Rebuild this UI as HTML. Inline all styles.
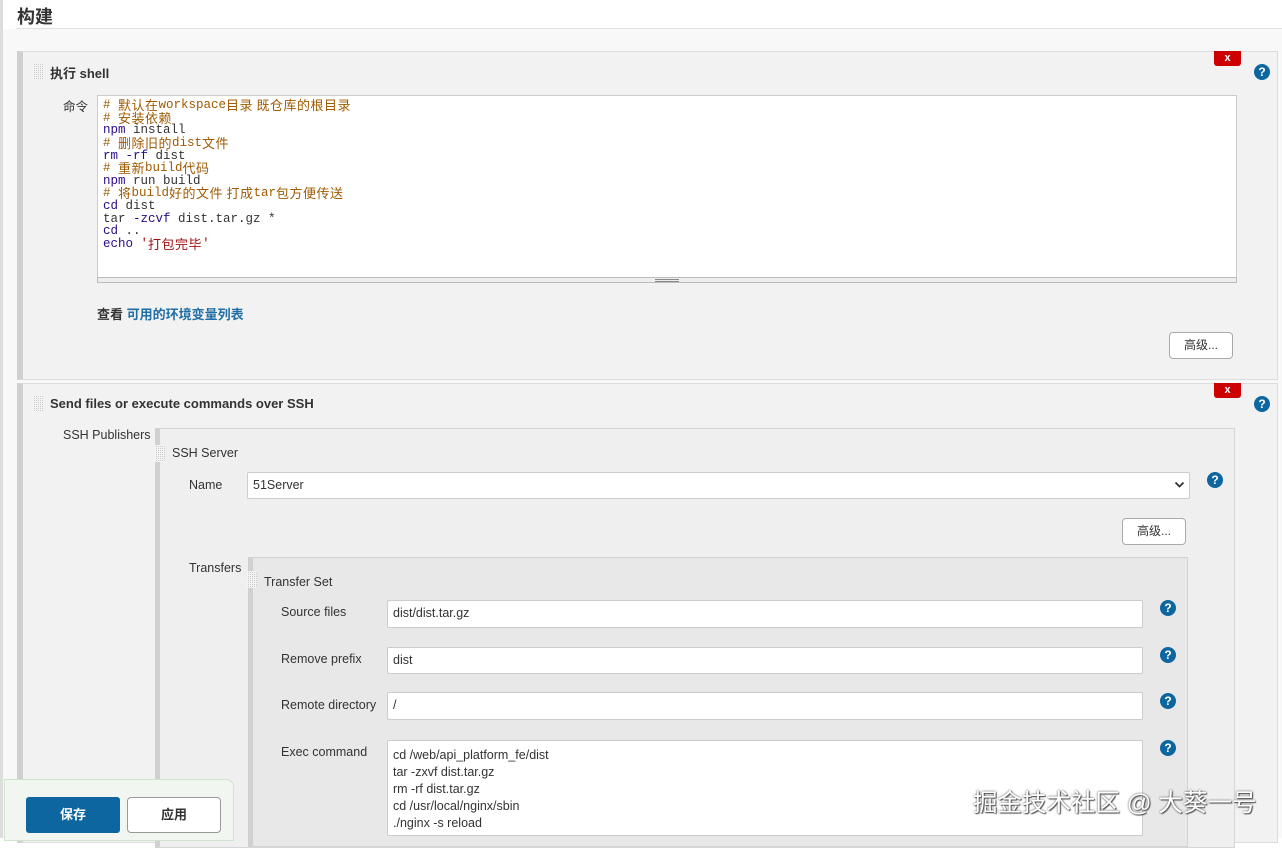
<!DOCTYPE html>
<html><head><meta charset="utf-8"><style>
*{box-sizing:border-box;margin:0;padding:0}
body{width:1282px;height:838px;overflow:hidden;background:#fff;font-family:"Liberation Sans","Noto Sans CJK SC",sans-serif;font-size:13px;color:#333;position:relative}
.a{position:absolute}
.grip{position:absolute;width:10px;height:17px;background-color:#c8c8c8;background-image:linear-gradient(90deg,#f4f4f4 1px,transparent 1px),linear-gradient(#f4f4f4 1px,transparent 1px);background-size:2px 2px}
.help{position:absolute;width:16px;height:16px;border-radius:50%;background:#0d66a0;color:#fff;font-weight:bold;font-size:12px;line-height:16px;text-align:center}
.x{position:absolute;width:27px;height:15px;background:#cc0000;color:#fff;font-weight:bold;font-size:11px;line-height:14px;text-align:center;border-radius:0 0 3px 3px}
.inp{position:absolute;background:#fff;border:1px solid #ccc;border-radius:2px;padding-left:5px;font-size:12.5px;line-height:25px;color:#333}
.btn{position:absolute;background:#fff;border:1px solid #aaa;border-radius:4px;font-size:12px;text-align:center;color:#333}
.lbl{position:absolute;font-size:12.5px;color:#333}
.code{font-family:"Liberation Mono",monospace;font-size:12.5px}
.code div{height:12.65px;line-height:12.65px;white-space:pre;overflow:visible}
.code span{display:inline-block;vertical-align:top;height:12.65px;line-height:12.65px}
.code .z{font-family:"Noto Sans CJK SC",sans-serif;font-size:13px;letter-spacing:0.5px;line-height:13px;position:relative;top:-1px}
.c{color:#a05a00}.k{color:#2a0a8a}.s{color:#a01010}
</style></head><body>
<div class="a" style="left:0;top:0;width:3px;height:838px;background:#ddd"></div>
<div class="a" style="left:17px;top:3px;font-size:18px;font-weight:bold;color:#333">构建</div>
<div class="a" style="left:16px;top:28px;width:1266px;height:1px;background:#e0e0e0"></div>
<div class="a" style="left:3px;top:29px;width:1279px;height:809px;background:#f8f8f8"></div>

<div class="a" style="left:17px;top:51px;width:1261px;height:329px;background:#f2f2f2;border:1px solid #dcdcdc;border-left:6px solid #cfcfcf"></div>
<div class="grip" style="left:33px;top:63px"></div>
<div class="a" style="left:50px;top:63px;font-weight:bold;font-size:13px">执行 shell</div>
<div class="x" style="left:1214px;top:51px">x</div>
<div class="help" style="left:1254px;top:64px">?</div>
<div class="lbl" style="left:63px;top:96px">命令</div>
<div class="a" style="left:97px;top:95px;width:1140px;height:188px;background:#fff;border:1px solid #ccc;border-bottom:none"></div>
<div class="a" style="left:97px;top:277px;width:1140px;height:6px;background:#eee;border:1px solid #bbb"></div>
<div class="a" style="left:655px;top:279px;width:24px;height:3px;border-top:1px solid #888;border-bottom:1px solid #888"></div>
<div class="a code" style="left:103px;top:99px"><div class="c"># <span class="z">默认在</span>workspace<span class="z">目录 既仓库的根目录</span></div><div class="c"># <span class="z">安装依赖</span></div><div><span class="k">npm</span> install</div><div class="c"># <span class="z">删除旧的</span>dist<span class="z">文件</span></div><div><span class="k">rm -rf</span> dist</div><div class="c"># <span class="z">重新</span>build<span class="z">代码</span></div><div><span class="k">npm</span> run build</div><div class="c"># <span class="z">将</span>build<span class="z">好的文件 打成</span>tar<span class="z">包方便传送</span></div><div><span class="k">cd</span> dist</div><div>tar <span class="k">-zcvf</span> dist.tar.gz *</div><div><span class="k">cd</span> ..</div><div><span class="k">echo</span> <span class="s">'<span class="z">打包完毕</span>'</span></div></div>
<div class="a" style="left:97px;top:304px;font-weight:bold">查看 <span style="color:#1f6ea5">可用的环境变量列表</span></div>
<div class="btn" style="left:1169px;top:332px;width:64px;height:27px;line-height:25px">高级...</div>

<div class="a" style="left:17px;top:383px;width:1261px;height:460px;background:#f2f2f2;border:1px solid #dcdcdc;border-left:6px solid #cfcfcf"></div>
<div class="grip" style="left:33px;top:395px"></div>
<div class="a" style="left:50px;top:396px;font-weight:bold;font-size:13px">Send files or execute commands over SSH</div>
<div class="x" style="left:1214px;top:383px">x</div>
<div class="help" style="left:1254px;top:396px">?</div>
<div class="lbl" style="left:63px;top:428px">SSH Publishers</div>

<div class="a" style="left:155px;top:428px;width:1080px;height:420px;background:#efefef;border:1px solid #d6d6d6;border-left:5px solid #d0d0d0"></div>
<div class="grip" style="left:155px;top:445px"></div>
<div class="lbl" style="left:172px;top:446px">SSH Server</div>
<div class="lbl" style="left:189px;top:478px">Name</div>
<div class="inp" style="left:247px;top:472px;width:943px;height:27px">51Server</div>
<svg class="a" style="left:1174px;top:481px" width="11" height="8" viewBox="0 0 11 8"><path d="M1.5 1.5 L5.5 5.5 L9.5 1.5" stroke="#333" stroke-width="1.8" fill="none"/></svg>
<div class="help" style="left:1207px;top:472px">?</div>
<div class="btn" style="left:1122px;top:518px;width:64px;height:27px;line-height:25px">高级...</div>
<div class="lbl" style="left:189px;top:561px">Transfers</div>

<div class="a" style="left:248px;top:557px;width:940px;height:290px;background:#e8e8e8;border:1px solid #d2d2d2;border-left:5px solid #d0d0d0"></div>
<div class="grip" style="left:247px;top:571px"></div>
<div class="lbl" style="left:264px;top:575px">Transfer Set</div>
<div class="lbl" style="left:281px;top:605px">Source files</div>
<div class="inp" style="left:387px;top:600px;width:756px;height:28px">dist/dist.tar.gz</div>
<div class="help" style="left:1160px;top:600px">?</div>
<div class="lbl" style="left:281px;top:652px">Remove prefix</div>
<div class="inp" style="left:387px;top:647px;width:756px;height:27px">dist</div>
<div class="help" style="left:1160px;top:647px">?</div>
<div class="lbl" style="left:281px;top:698px">Remote directory</div>
<div class="inp" style="left:387px;top:692px;width:756px;height:28px">/</div>
<div class="help" style="left:1160px;top:693px">?</div>
<div class="lbl" style="left:281px;top:745px">Exec command</div>
<div class="inp" style="left:387px;top:740px;width:756px;height:96px;line-height:17px;padding-top:6px">cd /web/api_platform_fe/dist<br>tar -zxvf dist.tar.gz<br>rm -rf dist.tar.gz<br>cd /usr/local/nginx/sbin<br>./nginx -s reload</div>
<div class="help" style="left:1160px;top:740px">?</div>

<div class="a" style="left:4px;top:779px;width:230px;height:62px;background:#f2f6f1;border:1px solid #cfe3cf;border-radius:0 8px 0 0"></div>
<div class="a" style="left:26px;top:797px;width:94px;height:36px;background:#0d66a0;border-radius:3px;color:#fff;font-weight:bold;text-align:center;line-height:36px">保存</div>
<div class="btn" style="left:127px;top:797px;width:94px;height:36px;line-height:34px;font-size:13px;font-weight:bold;border-color:#999">应用</div>

<div class="a" style="left:973px;top:784px;font-size:24.5px;color:#fff;text-shadow:0 0 2px #444,1px 1px 1px #555;font-family:'Liberation Sans','Noto Sans CJK SC',sans-serif">掘金技术社区 @ 大葵一号</div>
</body></html>
